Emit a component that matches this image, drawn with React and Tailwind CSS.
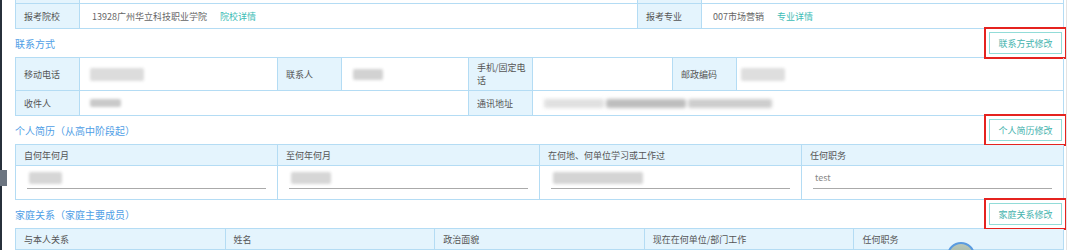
import React from "react"

const line = "border-[#b4dcf4]"
const labelCell = `flex items-center px-2 bg-[#e4f4fd] text-[#555] border-r border-b ${line}`
const valueCell = `flex items-center px-2 text-[#666] border-r border-b ${line}`

const Blur = ({ w, h = 12, c = "#d2d2d2" }) => (
  <div className="rounded-[2px] blur-[1.5px]" style={{ width: w, height: h, background: c }} />
)

const SectionHead = ({ title, action }) => (
  <div className="flex h-[28px] items-center justify-between">
    <span className="text-[10px] text-[#4f9ee6]">{title}</span>
    <button className="mr-[2px] h-[22px] w-[73px] border border-[#92dcd8] bg-white text-[9px] text-[#45b3ae] outline-2 outline-offset-[3px] outline-[#e5231f]">
      {action}
    </button>
  </div>
)

const UnderInput = ({ children }) => (
  <div className={`flex flex-col justify-end px-[11px] pb-[10px] border-r border-b ${line}`}>
    <div className="flex h-[22px] items-center border-b border-[#aaa] px-[2px] text-[9px] text-[#888]">
      {children}
    </div>
  </div>
)

export default function App() {
  return (
    <div className="relative flex h-[250px] w-[1080px] overflow-hidden bg-white font-['Noto_Sans_CJK_SC',sans-serif] text-[9px] leading-[13px]">
      {/* left window edge */}
      <div className="w-[15px] shrink-0">
        <div className="h-full w-[2px] bg-[#27303b]" />
      </div>

      <div className="w-[1049px] shrink-0">
        {/* 报考信息 */}
        <div className={`border-l ${line}`}>
          <div className="grid h-[4px] grid-cols-[64px_558px_64px_1fr]">
            <div className={`bg-[#e4f4fd] border-r border-b ${line}`} />
            <div className={`border-r border-b ${line}`} />
            <div className={`bg-[#e4f4fd] border-r border-b ${line}`} />
            <div className={`border-r border-b ${line}`} />
          </div>
          <div className="grid h-[25px] grid-cols-[64px_558px_64px_1fr]">
            <div className={labelCell}>报考院校</div>
            <div className={`${valueCell} gap-[13px] pl-3`}>
              <span>13928广州华立科技职业学院</span>
              <span className="text-[#3cbcb6]">院校详情</span>
            </div>
            <div className={labelCell}>报考专业</div>
            <div className={`${valueCell} gap-[13px] pl-[11px]`}>
              <span>007市场营销</span>
              <span className="text-[#3cbcb6]">专业详情</span>
            </div>
          </div>
        </div>

        <SectionHead title="联系方式" action="联系方式修改" />

        {/* 联系方式 */}
        <div className={`border-l border-t ${line}`}>
          <div className="grid h-[33px] grid-cols-[64px_198px_64px_127px_64px_140px_64px_1fr]">
            <div className={labelCell}>移动电话</div>
            <div className={`${valueCell} pl-[10px]`}><Blur w={54} h={13} c="#dcdcdc" /></div>
            <div className={labelCell}>联系人</div>
            <div className={`${valueCell} pl-[11px]`}><Blur w={30} h={11} /></div>
            <div className={`${labelCell} flex-col !items-start justify-center whitespace-nowrap`}>
              <span>手机/固定电</span>
              <span>话</span>
            </div>
            <div className={valueCell} />
            <div className={labelCell}>邮政编码</div>
            <div className={`${valueCell} pl-1`}><Blur w={44} h={13} c="#dedede" /></div>
          </div>
          <div className="grid h-[25px] grid-cols-[64px_198px_64px_127px_64px_140px_64px_1fr]">
            <div className={labelCell}>收件人</div>
            <div className={`${valueCell} col-span-3 pl-[10px]`}><Blur w={31} h={8} c="#c9c9c9" /></div>
            <div className={labelCell}>通讯地址</div>
            <div className={`${valueCell} col-span-3 pl-[11px]`}>
              <div className="flex items-center gap-[2px] blur-[1.2px]">
                <Blur w={60} h={9} c="#e0e0e0" />
                <Blur w={80} h={9} c="#bdbdbd" />
                <Blur w={84} h={9} c="#cdcdcd" />
              </div>
            </div>
          </div>
        </div>

        <SectionHead title="个人简历（从高中阶段起）" action="个人简历修改" />

        {/* 个人简历 */}
        <div className={`border-l border-t ${line}`}>
          <div className="grid h-[21px] grid-cols-4">
            <div className={labelCell}>自何年何月</div>
            <div className={labelCell}>至何年何月</div>
            <div className={labelCell}>在何地、何单位学习或工作过</div>
            <div className={labelCell}>任何职务</div>
          </div>
          <div className="grid h-[34px] grid-cols-4">
            <UnderInput><Blur w={33} h={12} c="#d6d6d6" /></UnderInput>
            <UnderInput><Blur w={40} h={12} c="#d6d6d6" /></UnderInput>
            <UnderInput><Blur w={90} h={12} c="#d4d4d4" /></UnderInput>
            <UnderInput>test</UnderInput>
          </div>
        </div>

        <SectionHead title="家庭关系（家庭主要成员）" action="家庭关系修改" />

        {/* 家庭关系 */}
        <div className={`border-l border-t ${line}`}>
          <div className="grid h-[21px] grid-cols-5">
            <div className={labelCell}>与本人关系</div>
            <div className={labelCell}>姓名</div>
            <div className={labelCell}>政治面貌</div>
            <div className={labelCell}>现在在何单位/部门工作</div>
            <div className={labelCell}>任何职务</div>
          </div>
        </div>
      </div>

      <div className="w-[16px] shrink-0">
        <div className="ml-[2px] h-full border-l border-[#e4e4e4]" />
      </div>

      {/* floating helper badge */}
      <div className="absolute left-[947px] top-[242px] h-[28px] w-[28px] rounded-full border-2 border-[#5a9be0] bg-gradient-to-b from-[#b9c7b8] to-[#8ea79a]" />
      {/* side panel handle */}
      <div className="absolute left-0 top-[170px] h-[16px] w-[7px] bg-[#6c7581]" />
    </div>
  )
}
